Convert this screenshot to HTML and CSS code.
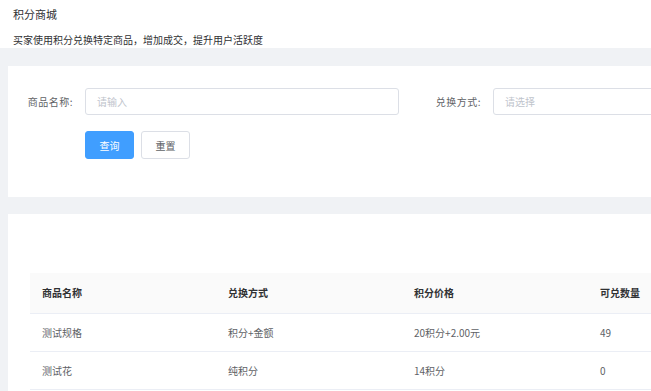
FILE: index.html
```html
<!DOCTYPE html>
<html lang="zh-CN">
<head>
<meta charset="utf-8">
<title>积分商城</title>
<link rel="stylesheet" href="styles.css">
</head>
<body>
<header class="page-head">
  <div class="page-title">积分商城</div>
  <div class="page-desc">买家使用积分兑换特定商品，增加成交，提升用户活跃度</div>
</header>
<main class="page-body">
  <section class="card search-card">
    <div class="form-row">
      <div class="form-item">
        <label class="form-label">商品名称:</label>
        <div class="input"><span class="placeholder">请输入</span></div>
      </div>
      <div class="form-item">
        <label class="form-label">兑换方式:</label>
        <div class="input"><span class="placeholder">请选择</span></div>
      </div>
    </div>
    <div class="btn-row">
      <button class="btn btn-primary">查询</button>
      <button class="btn">重置</button>
    </div>
  </section>
  <section class="card table-card">
    <table class="table">
      <thead>
        <tr><th>商品名称</th><th>兑换方式</th><th>积分价格</th><th>可兑数量</th></tr>
      </thead>
      <tbody>
        <tr><td>测试规格</td><td>积分+金额</td><td>20积分+2.00元</td><td>49</td></tr>
        <tr><td>测试花</td><td>纯积分</td><td>14积分</td><td>0</td></tr>
      </tbody>
    </table>
  </section>
</main>
</body>
</html>
```
FILE: styles.css
```css
html, body {
  margin: 0;
  padding: 0;
  overflow: hidden;
  background: #ffffff;
  font-family: "Noto Sans CJK SC", "Noto Sans", sans-serif;
  color: #303133;
}
.page-head {
  padding: 6px 13px 0;
  height: 42px;
}
.page-title {
  font-size: 11px;
  line-height: 16px;
  color: #303133;
}
.page-desc {
  margin-top: 10px;
  font-size: 10px;
  line-height: 16px;
  color: #303133;
}
.page-body {
  background: #f0f2f5;
  padding: 18px 0 0 8px;
  width: 900px;
  height: 343px;
  box-sizing: border-box;
  overflow: hidden;
}
.card {
  background: #ffffff;
}
.search-card {
  height: 131px;
  padding-top: 22px;
  box-sizing: border-box;
}
.form-row {
  display: flex;
  gap: 17px;
}
.form-item {
  display: flex;
  align-items: center;
}
.form-label {
  width: 77px;
  box-sizing: border-box;
  padding-right: 12px;
  text-align: right;
  font-size: 10px;
  letter-spacing: 0.5px;
  color: #606266;
}
.input {
  width: 314px;
  height: 27px;
  box-sizing: border-box;
  border: 1px solid #dcdfe6;
  border-radius: 3px;
  padding: 0 11px;
  display: flex;
  align-items: center;
}
.placeholder {
  font-size: 10px;
  color: #c0c4cc;
}
.btn-row {
  display: flex;
  gap: 7px;
  margin-top: 16px;
  padding-left: 77px;
}
.btn {
  width: 49px;
  height: 28px;
  box-sizing: border-box;
  border: 1px solid #dcdfe6;
  border-radius: 3px;
  background: #ffffff;
  color: #606266;
  font-family: inherit;
  font-size: 10px;
  padding: 0;
}
.btn-primary {
  background: #409eff;
  border-color: #409eff;
  color: #ffffff;
}
.table-card {
  margin-top: 17px;
  padding: 59px 0 0 22px;
  height: 200px;
  box-sizing: border-box;
}
.table {
  border-collapse: collapse;
  font-size: 10px;
}
.table th, .table td {
  width: 186px;
  box-sizing: border-box;
  padding: 0 12px;
  text-align: left;
  border-bottom: 1px solid #ebeef5;
}
.table th {
  height: 40px;
  background: #fafafa;
  color: #303133;
  font-weight: bold;
}
.table td {
  height: 38px;
  color: #606266;
}
```
